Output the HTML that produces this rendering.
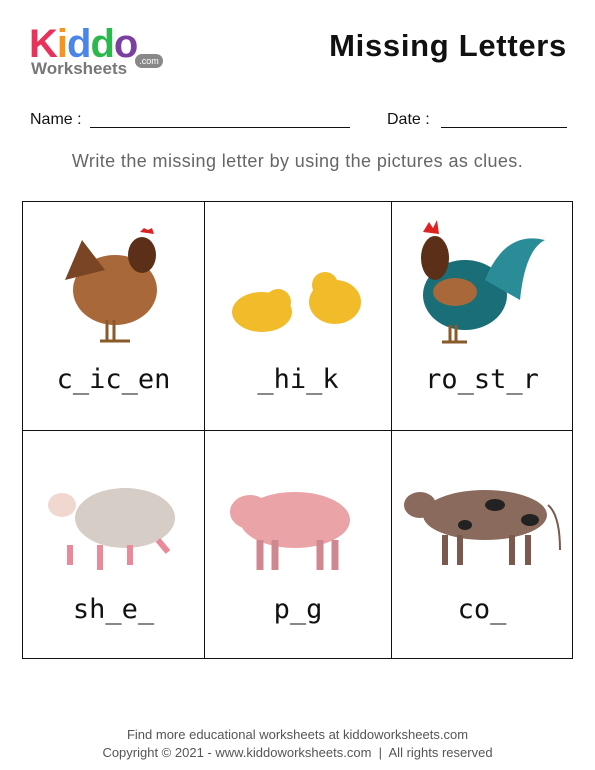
<!DOCTYPE html>
<html><head><meta charset="utf-8"><style>
body{margin:0;width:595px;height:770px;background:#fff;position:relative;font-family:"Liberation Sans",sans-serif;overflow:hidden}
.a{position:absolute}
.w{position:absolute;width:100%;text-align:center;font-size:27px;color:#111;font-family:"DejaVu Sans Mono",monospace}
.cell{position:absolute;border:1px solid #111;box-sizing:border-box}
</style></head><body>
<div class="a" style="left:29px;top:24px;font-size:40px;font-weight:bold;line-height:40px;letter-spacing:-1px"><span style="color:#e8325a">K</span><span style="color:#f7941d">i</span><span style="color:#4a86e8">d</span><span style="color:#2db84d">d</span><span style="color:#7b3fa0">o</span></div>
<div class="a" style="left:31px;top:59px;font-size:17px;font-weight:bold;color:#777">Worksheets</div>
<div class="a" style="left:135px;top:54px;width:28px;height:14px;border-radius:7px;background:#888;color:#fff;font-size:9px;text-align:center;line-height:14px">.com</div>
<div class="a" style="right:28px;top:28px;font-size:31px;font-weight:bold;color:#111;white-space:nowrap;letter-spacing:0.7px">Missing Letters</div>
<div class="a" style="left:30px;top:111px;font-size:16px;color:#111">Name :</div>
<div class="a" style="left:90px;top:127px;width:260px;border-top:1px solid #111"></div>
<div class="a" style="left:387px;top:111px;font-size:16px;color:#111">Date :</div>
<div class="a" style="left:441px;top:127px;width:126px;border-top:1px solid #111"></div>
<div class="a" style="left:0;width:595px;top:151px;text-align:center;font-size:18px;letter-spacing:0.4px;color:#666;white-space:nowrap">Write the missing letter by using the pictures as clues.</div>

<div class="cell" style="left:22px;top:201px;width:183px;height:230px"></div>
<div class="cell" style="left:204px;top:201px;width:188px;height:230px"></div>
<div class="cell" style="left:391px;top:201px;width:182px;height:230px"></div>
<div class="cell" style="left:22px;top:430px;width:183px;height:229px"></div>
<div class="cell" style="left:204px;top:430px;width:188px;height:229px"></div>
<div class="cell" style="left:391px;top:430px;width:182px;height:229px"></div>

<svg class="a" style="left:0;top:0" width="595" height="770">
<ellipse cx="115" cy="290" rx="42" ry="35" fill="#a8683a"/>
<path d="M65 280 L82 240 L105 270 Z" fill="#7a4524"/>
<ellipse cx="142" cy="255" rx="14" ry="18" fill="#5c3018"/>
<path d="M140 232 l4-4 4 2 4-2 2 6z" fill="#d22"/>
<path d="M107 320 v20 M114 320 v20 M100 341 h30" stroke="#8a5a2a" stroke-width="3"/>
<ellipse cx="262" cy="312" rx="30" ry="20" fill="#f2bb2a"/><circle cx="278" cy="302" r="13" fill="#f2bb2a"/>
<ellipse cx="335" cy="302" rx="26" ry="22" fill="#f2bb2a"/><circle cx="325" cy="285" r="13" fill="#f2bb2a"/>
<ellipse cx="465" cy="295" rx="42" ry="35" fill="#1a6e78"/>
<ellipse cx="435" cy="258" rx="14" ry="22" fill="#5c3018"/>
<path d="M485 280 q20-50 60-40 q-20 10-25 60 z" fill="#2a8c96"/>
<ellipse cx="455" cy="292" rx="22" ry="14" fill="#a8683a"/>
<path d="M423 232 l6-10 4 6 4-8 2 14z" fill="#d22"/>
<path d="M450 325 v17 M456 325 v17 M442 342 h25" stroke="#8a5a2a" stroke-width="3"/>
<ellipse cx="125" cy="518" rx="50" ry="30" fill="#d6cdc6"/>
<ellipse cx="62" cy="505" rx="14" ry="12" fill="#f0d8d0"/>
<path d="M70 545 v20 M100 545 v25 M130 545 v20 M158 540 l10 12" stroke="#e88a9a" stroke-width="6"/>
<ellipse cx="295" cy="520" rx="55" ry="28" fill="#eaa3a6"/>
<ellipse cx="250" cy="512" rx="20" ry="17" fill="#eaa3a6"/>
<path d="M260 540 v30 M275 540 v30 M320 540 v30 M335 540 v30" stroke="#d08890" stroke-width="7"/>
<ellipse cx="485" cy="515" rx="62" ry="25" fill="#8a6a5c"/>
<ellipse cx="420" cy="505" rx="16" ry="13" fill="#8a6a5c"/>
<ellipse cx="495" cy="505" rx="10" ry="6" fill="#222"/><ellipse cx="530" cy="520" rx="9" ry="6" fill="#222"/><ellipse cx="465" cy="525" rx="7" ry="5" fill="#222"/>
<path d="M445 535 v30 M460 535 v30 M512 535 v30 M528 535 v30" stroke="#7a5a4c" stroke-width="6"/>
<path d="M548 505 q12 10 12 45" stroke="#7a5a4c" stroke-width="2" fill="none"/>
</svg>

<div class="w" style="left:22px;width:183px;top:364px">c_ic_en</div>
<div class="w" style="left:204px;width:188px;top:364px">_hi_k</div>
<div class="w" style="left:391px;width:182px;top:364px">ro_st_r</div>
<div class="w" style="left:22px;width:183px;top:594px">sh_e_</div>
<div class="w" style="left:204px;width:188px;top:594px">p_g</div>
<div class="w" style="left:391px;width:182px;top:594px">co_</div>

<div class="a" style="left:0;width:595px;top:727px;text-align:center;font-size:13px;color:#555">Find more educational worksheets at kiddoworksheets.com</div>
<div class="a" style="left:0;width:595px;top:745px;text-align:center;font-size:13px;color:#555">Copyright © 2021 - www.kiddoworksheets.com &nbsp;|&nbsp; All rights reserved</div>
</body></html>
